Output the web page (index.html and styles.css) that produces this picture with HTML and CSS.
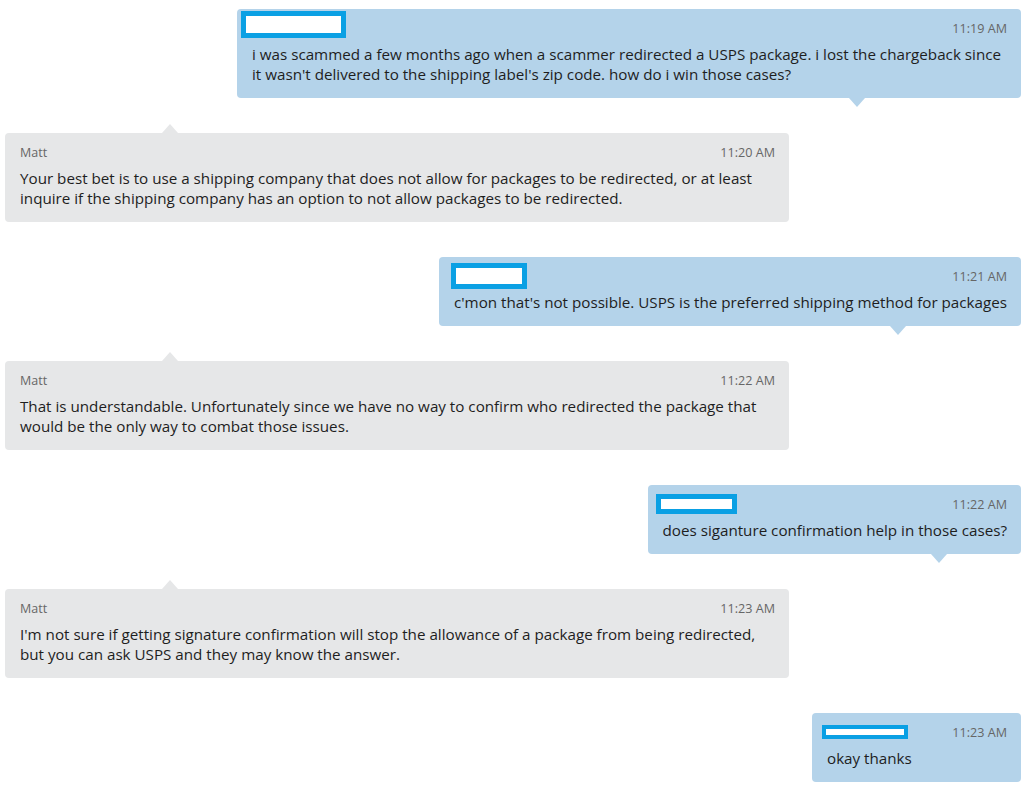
FILE: index.html
```html
<!DOCTYPE html>
<html lang="en">
<head>
  <meta charset="UTF-8">
  <meta name="viewport" content="width=device-width, initial-scale=1">
  <title>Chat Transcript</title>
  <link rel="stylesheet" href="styles.css">
</head>
<body>

  <div class="chat">

    <div class="msg msg-out">
      <div class="msg-head">
        <span class="redact redact-1"></span>
        <span class="msg-time">11:19 AM</span>
      </div>
      <p class="msg-text">i was scammed a few months ago when a scammer redirected a USPS package. i lost the chargeback since it wasn't delivered to the shipping label's zip code. how do i win those cases?</p>
    </div>

    <div class="msg msg-in">
      <div class="msg-head">
        <span class="msg-name">Matt</span>
        <span class="msg-time">11:20 AM</span>
      </div>
      <p class="msg-text">Your best bet is to use a shipping company that does not allow for packages to be redirected, or at least inquire if the shipping company has an option to not allow packages to be redirected.</p>
    </div>

    <div class="msg msg-out">
      <div class="msg-head">
        <span class="redact redact-2"></span>
        <span class="msg-time">11:21 AM</span>
      </div>
      <p class="msg-text">c'mon that's not possible. USPS is the preferred shipping method for packages</p>
    </div>

    <div class="msg msg-in">
      <div class="msg-head">
        <span class="msg-name">Matt</span>
        <span class="msg-time">11:22 AM</span>
      </div>
      <p class="msg-text">That is understandable. Unfortunately since we have no way to confirm who redirected the package that would be the only way to combat those issues.</p>
    </div>

    <div class="msg msg-out">
      <div class="msg-head">
        <span class="redact redact-3"></span>
        <span class="msg-time">11:22 AM</span>
      </div>
      <p class="msg-text">does siganture confirmation help in those cases?</p>
    </div>

    <div class="msg msg-in">
      <div class="msg-head">
        <span class="msg-name">Matt</span>
        <span class="msg-time">11:23 AM</span>
      </div>
      <p class="msg-text">I'm not sure if getting signature confirmation will stop the allowance of a package from being redirected, but you can ask USPS and they may know the answer.</p>
    </div>

    <div class="msg msg-out">
      <div class="msg-head">
        <span class="redact redact-4"></span>
        <span class="msg-time">11:23 AM</span>
      </div>
      <p class="msg-text">okay thanks</p>
    </div>

  </div>

</body>
</html>
```

FILE: styles.css
```css
body {
  font-family: 'Open Sans', 'Noto Sans', Arial, sans-serif;
  background-color: #fff;
  margin: 0;
  padding: 0;
  color: #1e1e1e;
}

.chat {
  display: flex;
  flex-direction: column;
  gap: 35px;
  padding: 9px 15px 0 5px;
}

.msg {
  position: relative;
  box-sizing: border-box;
  max-width: 784px;
  min-width: 209px;
  padding: 10px 14px 14px 15px;
  border-radius: 4px;
}

.msg-out {
  align-self: flex-end;
  background-color: #b4d3ea;
}

.msg-in {
  align-self: flex-start;
  width: 784px;
  background-color: #e6e7e8;
}

/* little pointer under / above the bubble */
.msg-out::after,
.msg-in::before {
  content: "";
  position: absolute;
  width: 0;
  height: 0;
  border-left: 8px solid transparent;
  border-right: 8px solid transparent;
}

.msg-out::after {
  left: calc(80% - 15px);
  bottom: -9px;
  border-top: 9px solid #b4d3ea;
}

.msg-in::before {
  left: 20%;
  top: -9px;
  border-bottom: 9px solid #e6e7e8;
}

.msg-head {
  display: flex;
  justify-content: space-between;
  align-items: center;
  height: 18px;
  gap: 20px;
}

.msg-name {
  font-size: 12.5px;
  color: #666;
}

.msg-time {
  font-size: 12.6px;
  color: #666;
}

.msg-text {
  margin: 7px 0 0;
  font-size: 15.2px;
  line-height: 20px;
}

/* blue boxes covering the customer's name */
.redact {
  display: block;
  box-sizing: border-box;
  border: 5px solid #0aa0e4;
  background-color: #fff;
}

.redact-1 {
  width: 105px;
  height: 27px;
  margin-left: -11px;
  margin-bottom: 7px;
}

.redact-2 {
  width: 76px;
  height: 26px;
  margin-left: -3px;
}

.redact-3 {
  width: 81px;
  height: 20px;
  margin-left: -7px;
}

.redact-4 {
  width: 86px;
  height: 14px;
  margin-left: -5px;
  border-width: 4px;
}
```
